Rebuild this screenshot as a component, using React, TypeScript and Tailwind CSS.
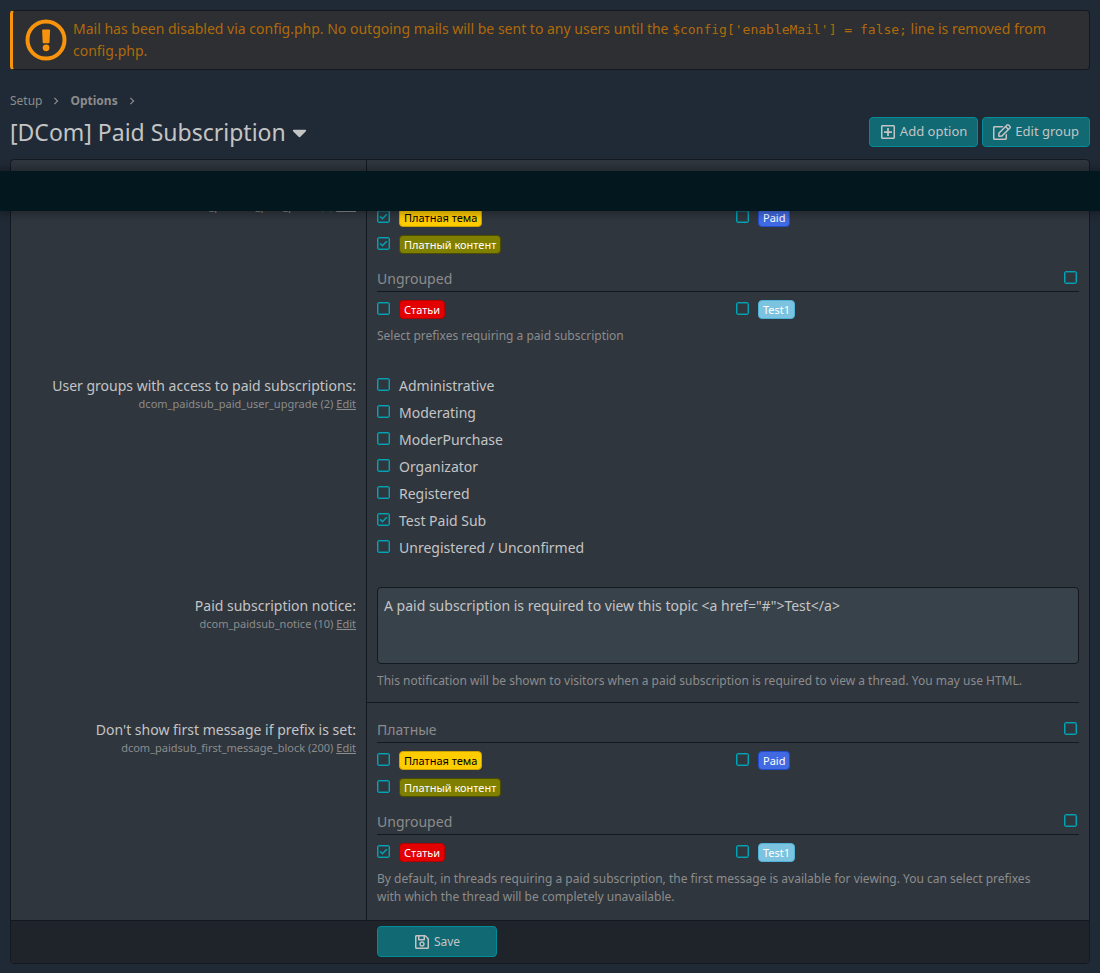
import { useState } from 'react';
import type { ReactNode } from 'react';
import { FaCaretDown, FaRegEdit, FaRegPlusSquare, FaRegSave } from 'react-icons/fa';

type Prefix = { name: string; color: string; checked?: boolean };
type PrefixGroup = { title: string; prefixes: Prefix[] };

const yellow = 'border-[#cca300] bg-[#ffcc00] text-black';
const blue = 'border-[#214cce] bg-[#4169e1] text-white';
const olive = 'border-[#4d4d00] bg-[#808000] text-white';
const red = 'border-[#b30000] bg-[#e20000] text-white';
const sky = 'border-[#4fb2d8] bg-[#7cc3e0] text-white';

const paidPrefixes: PrefixGroup[] = [
    {
        title: 'Платные',
        prefixes: [
            { name: 'Платная тема', color: yellow, checked: true },
            { name: 'Paid', color: blue },
            { name: 'Платный контент', color: olive, checked: true },
        ],
    },
    {
        title: 'Ungrouped',
        prefixes: [
            { name: 'Статьи', color: red },
            { name: 'Test1', color: sky },
        ],
    },
];

const blockPrefixes: PrefixGroup[] = [
    {
        title: 'Платные',
        prefixes: [
            { name: 'Платная тема', color: yellow },
            { name: 'Paid', color: blue },
            { name: 'Платный контент', color: olive },
        ],
    },
    {
        title: 'Ungrouped',
        prefixes: [
            { name: 'Статьи', color: red, checked: true },
            { name: 'Test1', color: sky },
        ],
    },
];

const userGroups = [
    { name: 'Administrative' },
    { name: 'Moderating' },
    { name: 'ModerPurchase' },
    { name: 'Organizator' },
    { name: 'Registered' },
    { name: 'Test Paid Sub', checked: true },
    { name: 'Unregistered / Unconfirmed' },
];

const Checkbox = ({ checked = false }: { checked?: boolean }) => {
    const [on, setOn] = useState(checked);

    return (
        <span className="relative mb-[3px] flex size-[13px] shrink-0">
            <input
                type="checkbox"
                checked={on}
                onChange={() => setOn(!on)}
                className="size-[13px] appearance-none rounded-xs border border-[#00a3b4] inset-ring inset-ring-[#1b6773]"
            />
            {on && (
                <svg viewBox="0 0 13 13" className="pointer-events-none absolute inset-0 size-[13px]" fill="none" stroke="#00a3b4" strokeWidth="1.6">
                    <path d="M3.2 6.4 L5.5 8.7 L9.8 4.2" />
                </svg>
            )}
        </span>
    );
};

const Angle = () => (
    <svg viewBox="0 0 6 10" className="h-2 w-1.5" fill="none" stroke="currentColor" strokeWidth="1.5">
        <path d="M1 1 L5 5 L1 9" />
    </svg>
);

const Hint = ({ children }: { children: ReactNode }) => (
    <p className="mt-1 pr-6 text-xs leading-[18px] text-[#8c8c8c]">{children}</p>
);

const PrefixList = ({ groups }: { groups: PrefixGroup[] }) => (
    <div className="flex flex-col gap-2.5">
        {groups.map((group) => (
            <div key={group.title}>
                <label className="flex h-6 items-start justify-between border-b border-[#141820] pr-0.5 text-sm leading-[21px] text-[#8c8c8c]">
                    {group.title}
                    <span className="flex h-[21px] items-center">
                        <Checkbox />
                    </span>
                </label>
                <ul className="grid grid-cols-2 gap-x-4 pt-1">
                    {group.prefixes.map((prefix) => (
                        <li key={prefix.name} className="h-[27px]">
                            <label className="flex h-full items-center gap-[9px]">
                                <Checkbox checked={prefix.checked} />
                                <span className={`rounded-sm border px-1 text-[11px] leading-[17px] ${prefix.color}`}>
                                    {prefix.name}
                                </span>
                            </label>
                        </li>
                    ))}
                </ul>
            </div>
        ))}
    </div>
);

type RowProps = {
    label: ReactNode;
    option: string;
    order: number;
    labelPad: string;
    fieldPad: string;
    children: ReactNode;
};

const Row = ({ label, option, order, labelPad, fieldPad, children }: RowProps) => (
    <dl className="flex">
        <dt className={`w-1/3 max-w-[355px] shrink-0 px-2.5 text-right ${labelPad}`}>
            <div className="text-sm leading-[21px] text-[#c4c4c4]">{label}</div>
            <div className="text-[11px] leading-4 text-[#8c8c8c]">
                {option} ({order}){' '}
                <a href="#edit" className="underline">
                    Edit
                </a>
            </div>
        </dt>
        <dd className="min-w-0 flex-1 border-l border-[#141820]">
            <div className={`mr-2.5 pl-2.5 ${fieldPad}`}>{children}</div>
        </dd>
    </dl>
);

const App = () => {
    return (
        <div className="min-h-screen bg-[#202a36] pt-2.5 pb-2 font-['Noto_Sans',sans-serif] text-[#c4c4c4]">
            {/* Mail notice */}
            <div className="mx-2.5 flex items-center gap-1.5 rounded-sm border border-l-3 border-[#141820] border-l-[#f7930d] bg-[#2d2f33] py-[7px] pr-2.5 pl-3">
                <svg viewBox="0 0 42 42" className="size-[42px] shrink-0" fill="#f7930d">
                    <circle cx="21" cy="21" r="18.5" fill="none" stroke="#f7930d" strokeWidth="4" />
                    <path d="M18 10.6h6.2a.9.9 0 0 1 .9 1l-.6 11.8a.9.9 0 0 1-.9.8h-5a.9.9 0 0 1-.9-.8l-.6-11.8a.9.9 0 0 1 .9-1z" />
                    <circle cx="21.1" cy="28.8" r="3.4" />
                </svg>
                <p className="text-sm leading-[22px] text-[#b06a0a]">
                    Mail has been disabled via config.php. No outgoing mails will be sent to any users until the{' '}
                    <code className="font-['DejaVu_Sans_Mono',monospace] text-[13px] leading-4">$config['enableMail'] = false;</code> line
                    is removed from config.php.
                </p>
            </div>

            {/* Page header */}
            <nav className="mx-2.5 mt-[22px] flex items-center gap-[11px] text-xs leading-[18px] text-[#8c8c8c]">
                <a href="#setup">Setup</a>
                <Angle />
                <a href="#options" className="font-bold">
                    Options
                </a>
                <Angle />
            </nav>
            <div className="mx-2.5 mt-[7px] flex h-[30px] items-center justify-between">
                <h1>
                    <button type="button" className="flex items-center gap-0.5 text-[23px] leading-[30px]">
                        [DCom] Paid Subscription
                        <FaCaretDown />
                    </button>
                </h1>
                <div className="flex gap-1">
                    <button type="button" className="flex h-[30px] items-center gap-1 rounded-sm border border-[#008c99] bg-[#106973] px-2.5 text-[13px]">
                        <FaRegPlusSquare className="size-4" />
                        Add option
                    </button>
                    <button type="button" className="flex h-[30px] items-center gap-1 rounded-sm border border-[#008c99] bg-[#106973] px-2.5 text-[13px]">
                        <FaRegEdit className="size-[18px]" />
                        Edit group
                    </button>
                </div>
            </div>

            <div className="relative mt-3">
                {/* Sticky admin bar floating over the form */}
                <div className="absolute inset-x-0 top-3 z-10 h-10 bg-[#02181e] shadow-[0_0_8px_3px_rgba(0,0,0,0.3)]" />

                <form className="mx-2.5 overflow-hidden rounded-sm border border-[#141820] bg-[#2f363e]" onSubmit={(e) => e.preventDefault()}>
                    <Row label="Paid prefixes:" option="dcom_paidsub_paid_prefix" order={1} labelPad="pt-[17px]" fieldPad="pt-4 pb-3">
                        <PrefixList groups={paidPrefixes} />
                        <Hint>Select prefixes requiring a paid subscription</Hint>
                    </Row>

                    <Row
                        label="User groups with access to paid subscriptions:"
                        option="dcom_paidsub_paid_user_upgrade"
                        order={2}
                        labelPad="pt-[18px]"
                        fieldPad="pt-[15px] pb-3"
                    >
                        <ul>
                            {userGroups.map((group) => (
                                <li key={group.name} className="h-[27px]">
                                    <label className="flex h-full items-center gap-[9px] text-sm">
                                        <Checkbox checked={group.checked} />
                                        {group.name}
                                    </label>
                                </li>
                            ))}
                        </ul>
                    </Row>

                    <Row
                        label={<label htmlFor="notice">Paid subscription notice:</label>}
                        option="dcom_paidsub_notice"
                        order={10}
                        labelPad="pt-[22px]"
                        fieldPad="pt-3.5 pb-3"
                    >
                        <textarea
                            id="notice"
                            defaultValue={'A paid subscription is required to view this topic <a href="#">Test</a>'}
                            className="block h-[77px] w-full resize-none rounded-sm border border-[#141820] bg-[#38424a] px-1.5 py-[7px] text-sm leading-[21px]"
                        />
                        <div className="pt-1">
                            <Hint>
                                This notification will be shown to visitors when a paid subscription is required to view a thread. You may use HTML.
                            </Hint>
                        </div>
                    </Row>

                    <Row
                        label="Don't show first message if prefix is set:"
                        option="dcom_paidsub_first_message_block"
                        order={200}
                        labelPad="pt-[17px]"
                        fieldPad="border-t border-[#141820] pt-4 pb-3.5"
                    >
                        <PrefixList groups={blockPrefixes} />
                        <Hint>
                            By default, in threads requiring a paid subscription, the first message is available for viewing. You can select
                            prefixes with which the thread will be completely unavailable.
                        </Hint>
                    </Row>

                    {/* Submit bar */}
                    <div className="flex border-t border-[#141820] bg-[#1e242a] pt-[5px] pb-1.5">
                        <div className="w-1/3 max-w-[355px] shrink-0" />
                        <button
                            type="submit"
                            className="ml-[11px] flex h-[31px] w-[120px] items-center justify-center gap-1 rounded-sm border border-[#008c99] bg-[#106973] text-xs"
                        >
                            <FaRegSave className="size-4" />
                            Save
                        </button>
                    </div>
                </form>
            </div>
        </div>
    );
};

export default App;
